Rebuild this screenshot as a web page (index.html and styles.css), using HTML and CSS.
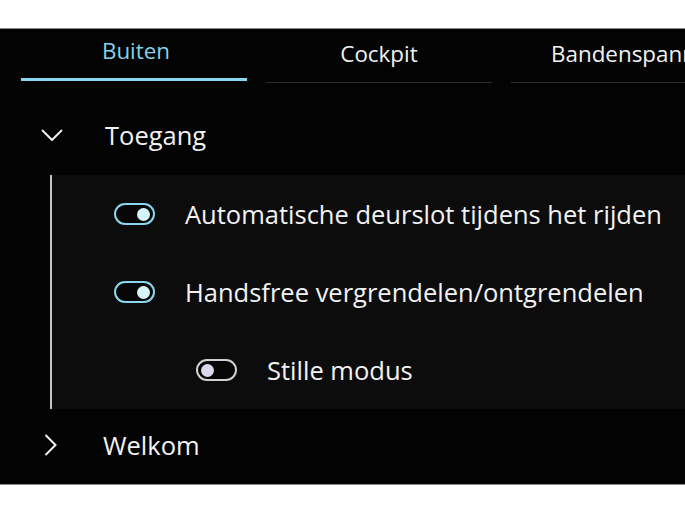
FILE: index.html
```html
<!DOCTYPE html>
<html lang="nl">
<head>
    <meta charset="UTF-8">
    <meta name="viewport" content="width=device-width, initial-scale=1.0">
    <title>Buiten</title>
    <link rel="stylesheet" href="styles.css">
</head>
<body>
    <div class="screen">
        <div class="tabs">
            <div class="tab active">Buiten</div>
            <div class="tab">Cockpit</div>
            <div class="tab last">Bandenspanning</div>
        </div>

        <div class="group-head">
            <span class="chevron">
                <svg width="22" height="12" viewBox="0 0 22 12"><path d="M1 1 L11 11 L21 1" fill="none" stroke="#f2f2f2" stroke-width="2"/></svg>
            </span>
            <span class="group-title">Toegang</span>
        </div>

        <div class="panel">
            <div class="row">
                <span class="toggle on"><span class="knob"></span></span>
                <span class="label">Automatische deurslot tijdens het rijden</span>
            </div>
            <div class="row">
                <span class="toggle on"><span class="knob"></span></span>
                <span class="label">Handsfree vergrendelen/ontgrendelen</span>
            </div>
            <div class="row sub">
                <span class="toggle"><span class="knob"></span></span>
                <span class="label">Stille modus</span>
            </div>
        </div>

        <div class="group-head closed">
            <span class="chevron">
                <svg width="13" height="22" viewBox="0 0 13 22"><path d="M1.5 1 L11.5 11 L1.5 21" fill="none" stroke="#f2f2f2" stroke-width="2"/></svg>
            </span>
            <span class="group-title">Welkom</span>
        </div>
    </div>
</body>
</html>
```

FILE: styles.css
```css
body {
    background-color: white;
    margin: 0;
    padding: 0;
    font-family: "Open Sans", "Noto Sans", sans-serif;
    font-weight: 500;
    color: #f2f2f2;
}
.screen {
    margin-top: 28px;
    height: 455px;
    background-color: #030303;
    border-top: 1px solid #8a8a8a;
    border-bottom: 1px solid #8a8a8a;
    overflow: hidden;
}
.tabs {
    display: flex;
    gap: 19px;
    padding-left: 21px;
    height: 54px;
    align-items: flex-end;
}
.tab {
    flex: 0 0 226px;
    box-sizing: border-box;
    text-align: center;
    font-size: 22.4px;
    line-height: 32px;
    padding-bottom: 12px;
    border-bottom: 1px solid #2e2e30;
    white-space: nowrap;
}
.tab.active {
    color: #82d2ea;
    border-bottom: 3px solid #8ad6ee;
    padding: 0 0 11px 4px;
    margin-bottom: 2px;
}
.tab.last {
    flex-basis: 200px;
    text-align: left;
    padding-left: 40px;
}
.group-head {
    display: flex;
    align-items: center;
    height: 80px;
    padding-top: 12px;
}
.group-head .chevron {
    width: 105px;
    padding-left: 41px;
    box-sizing: border-box;
    display: flex;
}
.group-head.closed {
    height: 72px;
    padding-top: 0;
}
.group-head.closed .chevron {
    width: 103px;
    padding-left: 44px;
}
.group-title {
    font-size: 25.5px;
}
.panel {
    margin-left: 50px;
    border-left: 2px solid #c4c4c6;
    background-color: #0c0c0d;
}
.row {
    display: flex;
    align-items: center;
    height: 78px;
    padding-left: 62px;
    gap: 30px;
}
.row.sub {
    padding-left: 144px;
}
.label {
    font-size: 25.5px;
    white-space: nowrap;
}
.toggle {
    width: 41px;
    height: 22px;
    box-sizing: border-box;
    border: 2px solid #d0d0d4;
    border-radius: 12px;
    background-color: #060606;
    display: flex;
    align-items: center;
    padding: 0 3px;
}
.toggle .knob {
    width: 13px;
    height: 13px;
    border-radius: 50%;
    background-color: #dcd8ea;
}
.toggle.on {
    border-color: #8ad6ee;
    justify-content: flex-end;
}
.toggle.on .knob {
    background-color: #d6f4fc;
}
```
